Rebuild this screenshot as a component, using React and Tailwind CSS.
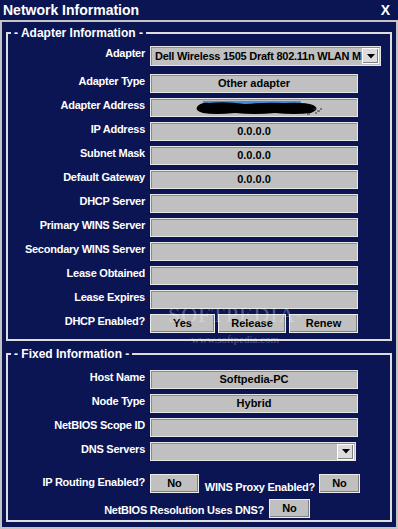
import React from "react";

const font = { fontFamily: '"Liberation Sans", Arial, sans-serif' };

function Field({ children, className = "" }) {
  return (
    <div
      className={`h-[19px] bg-[#c0c0c0] border border-[#e6e6e6] shadow-[inset_1px_1px_0_#8c8c8c] flex items-center justify-center text-[11px] font-bold text-black leading-[13px] ${className}`}
    >
      {children}
    </div>
  );
}

function Btn({ children, className = "" }) {
  return (
    <div
      className={`h-[19px] bg-[#c0c0c0] border border-[#ececec] shadow-[inset_-1px_-1px_0_#808080] flex items-center justify-center text-[11px] font-bold text-black leading-[13px] ${className}`}
    >
      {children}
    </div>
  );
}

function Arrow() {
  return (
    <div className="w-[17px] h-[16px] bg-[#dcdcdc] border border-white shadow-[inset_-1px_-1px_0_#808080] flex items-center justify-center shrink-0">
      <svg width="8" height="5" viewBox="0 0 8 5">
        <path d="M0 0h8L4 4.5z" fill="#000" />
      </svg>
    </div>
  );
}

function Row({ label, children }) {
  return (
    <div className="flex items-start">
      <div className="w-[137px] flex justify-end pt-[1px] text-[11px] font-bold text-white leading-[13px] whitespace-nowrap tracking-[-0.25px]">
        {label}
      </div>
      <div className="ml-[5px]">{children}</div>
    </div>
  );
}

function Group({ title, className = "", children }) {
  return (
    <fieldset className={`mx-[4px] border-2 border-[#dedede] px-0 ${className}`}>
      <legend className="ml-[3px] px-[3px] text-[12px] font-bold text-white leading-[14px]">
        - {title} -
      </legend>
      {children}
    </fieldset>
  );
}

const rows1 = [
  ["Adapter Type", "Other adapter"],
  ["Adapter Address", "__mac"],
  ["IP Address", "0.0.0.0"],
  ["Subnet Mask", "0.0.0.0"],
  ["Default Gateway", "0.0.0.0"],
  ["DHCP Server", ""],
  ["Primary WINS Server", ""],
  ["Secondary WINS Server", ""],
  ["Lease Obtained", ""],
  ["Lease Expires", ""],
];

export default function App() {
  return (
    <div className="w-[398px] h-[529px] bg-[#0b1553] relative overflow-hidden select-none" style={font}>
      <div className="h-[20px] flex items-center justify-between pl-[3px] pr-[8px] text-white font-bold text-[14px] leading-[16px]">
        <span>Network Information</span>
        <span>X</span>
      </div>
      <div className="h-[509px] border-2 border-[#c4c4c4] pt-[4px]">
        <Group title="Adapter Information" className="pt-[6px] pb-[6px]">
          <div className="flex flex-col gap-[5px]">
            <Row label="Adapter">
              <div className="w-[231px] h-[20px] mb-[3px] bg-[#c0c0c0] border border-[#e6e6e6] shadow-[inset_1px_1px_0_#8c8c8c] flex items-center pl-[4px] pr-[1px] overflow-hidden">
                <span className="flex-1 overflow-hidden whitespace-nowrap text-[11px] font-bold text-black leading-[13px] tracking-[-0.25px]">
                  Dell Wireless 1505 Draft 802.11n WLAN Mini-Card
                </span>
                <Arrow />
              </div>
            </Row>
            {rows1.map(([label, value]) => (
              <Row key={label} label={label}>
                <Field className="w-[208px]">
                  {value === "__mac" ? (
                    <svg width="130" height="16" viewBox="0 0 130 16" className="ml-[12px]">
                      <rect x="8" y="1" width="98" height="6" fill="#3b8fe0" />
                      <path
                        d="M2 7 Q6 2 14 3 Q30 1 50 4 Q70 2 90 3 Q110 2 118 5 Q126 9 116 13 Q100 15 80 13 Q60 15 40 13 Q20 15 8 13 Q0 11 2 7z"
                        fill="#000"
                      />
                      <path d="M118 9h3M122 11h3M120 13h2M112 14h3M125 9h2" stroke="#333" strokeWidth="1" />
                    </svg>
                  ) : (
                    value
                  )}
                </Field>
              </Row>
            ))}
            <Row label="DHCP Enabled?">
              <div className="flex gap-[3px]">
                <Btn className="w-[65px]">Yes</Btn>
                <Btn className="w-[68px]">Release</Btn>
                <Btn className="w-[69px]">Renew</Btn>
              </div>
            </Row>
          </div>
        </Group>

        <Group title="Fixed Information" className="mt-[6px] pt-[9px] pb-[2px]">
          <div className="flex flex-col gap-[5px]">
            <Row label="Host Name">
              <Field className="w-[208px]">Softpedia-PC</Field>
            </Row>
            <Row label="Node Type">
              <Field className="w-[208px]">Hybrid</Field>
            </Row>
            <Row label="NetBIOS Scope ID">
              <Field className="w-[208px]" />
            </Row>
            <Row label="DNS Servers">
              <div className="w-[206px] h-[19px] bg-[#c0c0c0] border border-[#e6e6e6] shadow-[inset_1px_1px_0_#8c8c8c] flex items-center justify-end pr-[1px]">
                <Arrow />
              </div>
            </Row>
            <div className="flex items-start mt-[8px]">
              <div className="w-[137px] flex justify-end pt-[2px] text-[11px] font-bold text-white leading-[13px] whitespace-nowrap tracking-[-0.25px]">
                IP Routing Enabled?
              </div>
              <Btn className="ml-[5px] w-[49px]">No</Btn>
              <div className="w-[120px] flex justify-end pr-[4px] pt-[7px] text-[11px] font-bold text-white leading-[13px] whitespace-nowrap tracking-[-0.25px]">
                WINS Proxy Enabled?
              </div>
              <Btn className="w-[41px]">No</Btn>
            </div>
            <div className="flex items-start">
              <div className="w-[256px] flex justify-end pt-[5px] text-[11px] font-bold text-white leading-[13px] whitespace-nowrap tracking-[-0.25px]">
                NetBIOS Resolution Uses DNS?
              </div>
              <Btn className="ml-[5px] w-[41px]">No</Btn>
            </div>
          </div>
        </Group>
      </div>

      <div className="absolute left-[168px] top-[303px] pointer-events-none text-center text-white/30" style={{ fontFamily: '"Liberation Serif", serif' }}>
        <div className="text-[22px] leading-[24px] tracking-[1px]">
          SOFTPEDIA<sup className="text-[6px]">™</sup>
        </div>
        <div className="text-[11px] leading-[12px] mt-[6px]">www.softpedia.com</div>
      </div>
    </div>
  );
}
